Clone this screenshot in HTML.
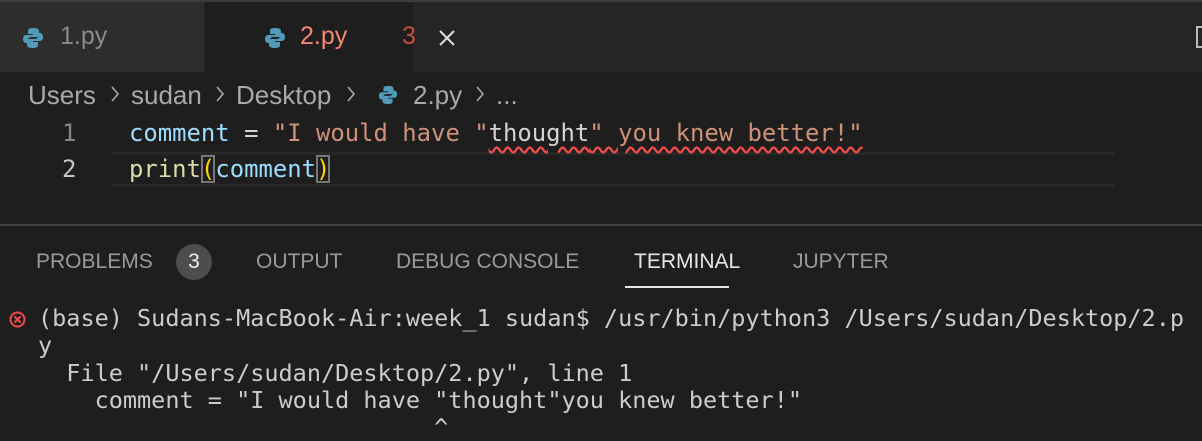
<!DOCTYPE html>
<html><head><style>
body{margin:0;width:1202px;height:434px;background:#1e1e1e;overflow:hidden;position:relative;font-family:"Liberation Sans",sans-serif}
.abs{position:absolute}
.mono{font-family:"DejaVu Sans Mono","Liberation Mono",monospace;white-space:pre}
.bc{position:absolute;top:80px;font-size:26px;color:#a9a9a9;white-space:pre}
.ch{position:absolute;top:84px;width:10px;height:20px}
</style></head><body>
<div class="abs" style="left:0;top:0;width:1202px;height:2px;background:#3c3c3c"></div>
<div class="abs" style="left:0;top:2px;width:1202px;height:70px;background:#252526"></div>
<div class="abs" style="left:0;top:2px;width:204px;height:70px;background:#2d2d2d"></div>
<div class="abs" style="left:205px;top:2px;width:208px;height:70px;background:#1e1e1e"></div>
<svg class="abs" style="left:22px;top:27px" width="22" height="22" viewBox="0 0 22 22"><path d="M11 1C6 1 6 3 6 4v3h5v1H4C2 8 1 10 1 12s1 4 3 4h2v-3c0-2 2-3 3-3h5c2 0 3-1 3-3V4c0-2-2-3-6-3z" fill="#519aba"/><path d="M11 21c5 0 5-2 5-3v-3h-5v-1h7c2 0 3-2 3-4s-1-4-3-4h-2v3c0 2-2 3-3 3H8c-2 0-3 1-3 3v3c0 2 2 3 6 3z" fill="#519aba"/></svg>
<div class="abs" style="left:60px;top:22px;font-size:25px;color:#8b8b8b">1.py</div>
<svg class="abs" style="left:264px;top:27px" width="22" height="22" viewBox="0 0 22 22"><path d="M11 1C6 1 6 3 6 4v3h5v1H4C2 8 1 10 1 12s1 4 3 4h2v-3c0-2 2-3 3-3h5c2 0 3-1 3-3V4c0-2-2-3-6-3z" fill="#519aba"/><path d="M11 21c5 0 5-2 5-3v-3h-5v-1h7c2 0 3-2 3-4s-1-4-3-4h-2v3c0 2-2 3-3 3H8c-2 0-3 1-3 3v3c0 2 2 3 6 3z" fill="#519aba"/></svg>
<div class="abs" style="left:300px;top:22px;font-size:25px;color:#f48771">2.py</div>
<div class="abs" style="left:402px;top:22px;font-size:25px;color:#c74e39">3</div>
<svg class="abs" style="left:437px;top:28px" width="20" height="20"><path d="M3 3L17 17M17 3L3 17" stroke="#ddd" stroke-width="2"/></svg>
<div class="abs" style="left:1196px;top:26px;width:8px;height:22px;border:2px solid #bbb;box-sizing:border-box"></div>
<div class="bc" style="left:28px">Users</div>
<svg class="ch" style="left:110px" viewBox="0 0 10 20"><path d="M2 3l6 7-6 7" stroke="#a9a9a9" stroke-width="1.6" fill="none"/></svg>
<div class="bc" style="left:131px">sudan</div>
<svg class="ch" style="left:215px" viewBox="0 0 10 20"><path d="M2 3l6 7-6 7" stroke="#a9a9a9" stroke-width="1.6" fill="none"/></svg>
<div class="bc" style="left:236px">Desktop</div>
<svg class="ch" style="left:346px" viewBox="0 0 10 20"><path d="M2 3l6 7-6 7" stroke="#a9a9a9" stroke-width="1.6" fill="none"/></svg>
<svg class="abs" style="left:378px;top:85px" width="20" height="20" viewBox="0 0 22 22"><path d="M11 1C6 1 6 3 6 4v3h5v1H4C2 8 1 10 1 12s1 4 3 4h2v-3c0-2 2-3 3-3h5c2 0 3-1 3-3V4c0-2-2-3-6-3z" fill="#519aba"/><path d="M11 21c5 0 5-2 5-3v-3h-5v-1h7c2 0 3-2 3-4s-1-4-3-4h-2v3c0 2-2 3-3 3H8c-2 0-3 1-3 3v3c0 2 2 3 6 3z" fill="#519aba"/></svg>
<div class="bc" style="left:413px">2.py</div>
<svg class="ch" style="left:475px" viewBox="0 0 10 20"><path d="M2 3l6 7-6 7" stroke="#a9a9a9" stroke-width="1.6" fill="none"/></svg>
<div class="bc" style="left:496px">...</div>
<div class="abs" style="left:112px;top:152px;width:1002px;height:35px;box-sizing:border-box;border-top:3px solid #282828;border-bottom:3px solid #282828"></div>
<div class="abs mono" style="left:62px;top:119px;font-size:24px;color:#858585">1</div>
<div class="abs mono" style="left:62px;top:155px;font-size:24px;color:#c6c6c6">2</div>
<div class="abs mono" style="left:129px;top:119px;font-size:23.9px;color:#ce9178"><span style="color:#9cdcfe">comment</span><span style="color:#d4d4d4"> = </span>"I would have "<span style="color:#d4d4d4;text-decoration:underline wavy #f14c4c;text-underline-offset:5px">thought</span><span style="text-decoration:underline wavy #f14c4c;text-underline-offset:5px">" you knew better!"</span></div>
<div class="abs mono" style="left:129px;top:155px;font-size:23.9px;color:#dcdcaa">print<span style="color:#ffd700;outline:2px solid #777;outline-offset:-2px">(</span><span style="color:#9cdcfe">comment</span><span style="color:#ffd700;outline:2px solid #777;outline-offset:-2px">)</span></div>
<div class="abs" style="left:0;top:224px;width:1202px;height:2px;background:#404040"></div>
<div class="abs" style="left:36px;top:250px;font-size:21px;color:#9a9a9a;white-space:pre">PROBLEMS</div>
<div class="abs" style="left:176px;top:244px;width:36px;height:36px;border-radius:18px;background:#4d4d4d;color:#eee;font-size:21px;text-align:center;line-height:36px">3</div>
<div class="abs" style="left:256px;top:250px;font-size:21px;color:#9a9a9a">OUTPUT</div>
<div class="abs" style="left:396px;top:250px;font-size:21px;color:#9a9a9a">DEBUG CONSOLE</div>
<div class="abs" style="left:634px;top:250px;font-size:21px;color:#e7e7e7">TERMINAL</div>
<div class="abs" style="left:625px;top:286px;width:104px;height:2px;background:#e7e7e7"></div>
<div class="abs" style="left:793px;top:250px;font-size:21px;color:#9a9a9a">JUPYTER</div>
<svg class="abs" style="left:9px;top:311px" width="17" height="17"><circle cx="8.5" cy="8.5" r="7" fill="none" stroke="#f14c4c" stroke-width="2"/><path d="M5.5 5.5l6 6M11.5 5.5l-6 6" stroke="#f14c4c" stroke-width="2"/></svg>
<div class="abs mono" style="left:38px;top:305px;font-size:23.5px;line-height:27.3px;color:#cccccc">(base) Sudans-MacBook-Air:week_1 sudan$ /usr/bin/python3 /Users/sudan/Desktop/2.p
y
  File "/Users/sudan/Desktop/2.py", line 1
    comment = "I would have "thought"you knew better!"
                            ^</div>
</body></html>
